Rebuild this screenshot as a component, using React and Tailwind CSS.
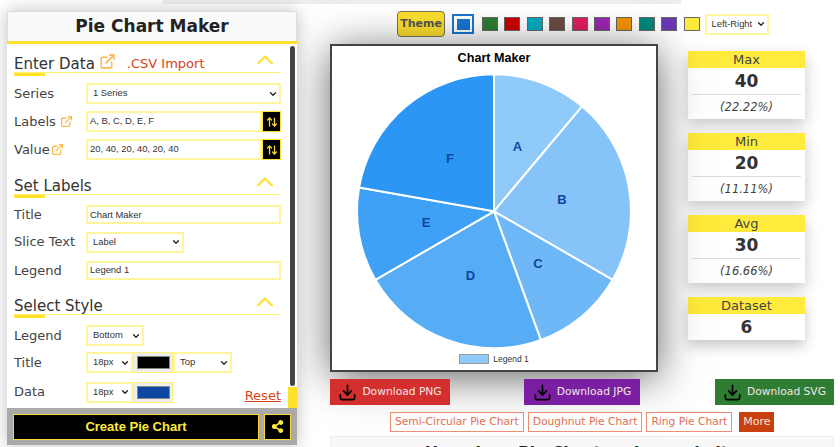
import React from "react";
import { ExternalLink, ChevronUp, ChevronDown, ArrowUpDown, Download } from "lucide-react";
import { FaShareAlt } from "react-icons/fa";

const slices = [
  { label: "A", from: 0, to: 40, color: "#90caf9", x: 517.5, y: 146 },
  { label: "B", from: 40, to: 120, color: "#85c3f8", x: 562, y: 199 },
  { label: "C", from: 120, to: 160, color: "#6fb8f7", x: 538, y: 263 },
  { label: "D", from: 160, to: 240, color: "#56adf6", x: 470.5, y: 275 },
  { label: "E", from: 240, to: 280, color: "#3fa1f5", x: 426, y: 222 },
  { label: "F", from: 280, to: 360, color: "#2b96f3", x: 450, y: 158 },
];

const swatches = ["#2e7d32", "#cc0000", "#00acc1", "#6d4c41", "#e01e63", "#9c27b0", "#f59300", "#00897b", "#673ab7", "#ffeb3b"];

const field = "h-[21px] border-2 border-[#fff59d] bg-white text-[9.4px] text-[#333] font-['Liberation_Sans',sans-serif] flex items-center";

const point = (deg, r) => {
  const a = ((deg - 90) * Math.PI) / 180;
  return [164 + r * Math.cos(a), 167.3 + r * Math.sin(a)];
};

const slicePath = (from, to) => {
  const [x1, y1] = point(from, 137);
  const [x2, y2] = point(to, 137);
  return `M164 167.3 L${x1} ${y1} A137 137 0 0 1 ${x2} ${y2} Z`;
};

const FakeSelect = ({ children, className }) => (
  <div className={`${field} justify-between pl-[5px] pr-[1px] ${className}`}>
    <span>{children}</span>
    <ChevronDown size={10} strokeWidth={3} className="text-[#222]" />
  </div>
);

const SectionHead = ({ title, children }) => (
  <div className="relative h-[29px] border-b border-[#fff176] flex items-end">
    <h2 className="text-[15px] leading-[16px] text-[#333]">{title}</h2>
    {children}
    <ChevronUp size={28} strokeWidth={2} className="absolute right-[2px] top-[2px] text-[#ffe135]" />
    <span className="absolute left-0 bottom-[-4px] w-[31px] h-[3px] bg-[#fee12b]" />
  </div>
);

const Row = ({ label, icon, children, className = "" }) => (
  <div className={`flex items-center ${className}`}>
    <div className="w-[72px] shrink-0 flex items-center text-[13px] text-[#444]">
      {label}
      {icon}
    </div>
    {children}
  </div>
);

const SwapButton = () => (
  <span className="w-[19px] h-[21px] bg-black border border-[#fee12b] flex items-center justify-center shrink-0">
    <ArrowUpDown size={12} strokeWidth={2.5} className="text-[#fdd835]" />
  </span>
);

const Stat = ({ title, value, pct }) => (
  <div className="w-[117px] bg-white shadow-[0_6px_14px_rgba(0,0,0,0.22)] text-center text-[#333]">
    <div className="h-[17px] bg-[#ffeb3b] text-[13px] leading-[18px] text-[#444]">{title}</div>
    <div className="text-[17px] font-bold leading-[26px]">{value}</div>
    {pct && (
      <div className="mx-[4px] border-t border-[#ddd] h-[25px] text-[11.5px] italic leading-[24px] text-[#444]">{pct}</div>
    )}
  </div>
);

const DownloadBtn = ({ label, color, width, className = "" }) => (
  <button className={`h-[26px] ${width} ${color} ${className} flex items-center justify-center gap-[5px] text-[10.7px] text-[#f3e5e5]`}>
    <Download size={19} strokeWidth={2.2} className="text-black" />
    {label}
  </button>
);

const RelatedLink = ({ children }) => (
  <a className="h-[20px] px-[4px] border border-[#e8906f] text-[#e07050] text-[10.7px] leading-[18px] whitespace-nowrap">{children}</a>
);

export default function App() {
  return (
    <div className="relative w-[840px] h-[447px] overflow-hidden bg-white font-['DejaVu_Sans',sans-serif]">
      <div className="absolute left-[162px] top-0 w-[519px] h-[4px] bg-[#eeeeee]" />

      <div className="flex items-start pl-[7px] pt-[11px]">
        {/* left panel */}
        <aside className="relative z-10 w-[290px] h-[434px] shrink-0 flex flex-col bg-white shadow-[0_0_16px_rgba(0,0,0,0.25)]">
          <div className="h-[30px] shrink-0 bg-[#fafafa] border border-b-0 border-[#d8dde2] text-center text-[17px] font-bold leading-[29px] text-[#222]">
            Pie Chart Maker
          </div>
          <div className="h-[3px] shrink-0 bg-[#fee12b]" />
          <div className="relative flex-1 min-h-0 pl-[7px] pr-[16px] overflow-hidden">
            <span className="absolute right-0 top-0 bottom-0 w-[9px] bg-[#fee12b]" />
            <span className="absolute right-0 top-0 h-[343px] w-[9px] bg-white" />
            <span className="absolute right-[2px] top-[2px] h-[340px] w-[5px] rounded-full bg-[#444]" />

            <SectionHead title="Enter Data">
              <ExternalLink size={17} strokeWidth={2.2} className="ml-[4px] mb-[2px] text-[#fdb94d]" />
              <span className="ml-[11px] text-[13px] leading-[16px] text-[#d84315]">.CSV Import</span>
            </SectionHead>
            <div className="mt-[10px] flex flex-col gap-[7px]">
              <Row label="Series">
                <FakeSelect className="flex-1">1 Series</FakeSelect>
              </Row>
              <Row label="Labels" icon={<ExternalLink size={13} strokeWidth={2.4} className="ml-[4px] text-[#fdb94d]" />}>
                <div className={`${field} flex-1 pl-[2px]`}>A, B, C, D, E, F</div>
                <SwapButton />
              </Row>
              <Row label="Value" icon={<ExternalLink size={13} strokeWidth={2.4} className="ml-[1px] text-[#fdb94d]" />}>
                <div className={`${field} flex-1 pl-[2px]`}>20, 40, 20, 40, 20, 40</div>
                <SwapButton />
              </Row>
            </div>

            <div className="mt-[6px]">
              <SectionHead title="Set Labels" />
            </div>
            <div className="mt-[10px] flex flex-col gap-[7px]">
              <Row label="Title">
                <div className={`${field} flex-1 !h-[19px] pl-[2px]`}>Chart Maker</div>
              </Row>
              <Row label="Slice Text">
                <FakeSelect className="w-[98px]">Label</FakeSelect>
              </Row>
              <Row label="Legend" className="mt-[1px]">
                <div className={`${field} flex-1 !h-[19px] pl-[2px]`}>Legend 1</div>
              </Row>
            </div>

            <div className="mt-[6px]">
              <SectionHead title="Select Style" />
            </div>
            <div className="mt-[10px] flex flex-col gap-[6px]">
              <Row label="Legend">
                <FakeSelect className="w-[58px]">Bottom</FakeSelect>
              </Row>
              <Row label="Title">
                <FakeSelect className="w-[47px]">18px</FakeSelect>
                <span className="w-[40px] h-[21px] bg-[#eeeeee] border border-[#fff176] flex items-center justify-center">
                  <span className="w-[33px] h-[13px] bg-black border border-[#888]" />
                </span>
                <FakeSelect className="w-[59px]">Top</FakeSelect>
              </Row>
              <Row label="Data" className="mt-[1px]">
                <FakeSelect className="w-[47px]">18px</FakeSelect>
                <span className="w-[40px] h-[21px] bg-[#eeeeee] border border-[#fff176] flex items-center justify-center">
                  <span className="w-[33px] h-[13px] bg-[#0d47a1] border border-[#888]" />
                </span>
                <a className="ml-auto mt-[8px] text-[13px] leading-[16px] text-[#d84315] underline">Reset</a>
              </Row>
            </div>
          </div>
          <div className="h-[37px] shrink-0 bg-[#aaaaaa] flex items-center gap-[5px] pl-[6px]">
            <button className="w-[246px] h-[26px] bg-black border border-[#fdd835] text-[#ffeb3b] text-[13px] font-bold font-['Liberation_Sans',sans-serif]">
              Create Pie Chart
            </button>
            <button className="w-[27px] h-[26px] bg-black border border-[#fdd835] flex items-center justify-center">
              <FaShareAlt size={13} className="text-[#ffeb3b]" />
            </button>
          </div>
        </aside>

        {/* chart area */}
        <main className="ml-[33px] w-[504px] shrink-0 flex flex-col">
          <div className="flex items-center h-[26px] pl-[67px]">
            <button className="w-[48px] h-[26px] rounded-[4px] bg-[#fde02f] border border-[#77715a] text-[11px] font-bold text-[#555]">
              Theme
            </button>
            <span className="ml-[7px] w-[22px] h-[20px] border-2 border-[#1976d2] flex items-center justify-center">
              <span className="w-[13px] h-[11px] bg-[#1976d2]" />
            </span>
            <div className="ml-[8px] flex gap-[6.4px]">
              {swatches.map((c) => (
                <span key={c} className="w-[16px] h-[14px] border border-[#666]" style={{ backgroundColor: c }} />
              ))}
            </div>
            <FakeSelect className="ml-[5px] w-[64px]">Left-Right</FakeSelect>
          </div>

          <div className="mt-[7px] flex items-start">
            <div className="relative w-[328px] h-[328px] shrink-0 bg-white border-2 border-[#444] shadow-[0_6px_40px_rgba(0,0,0,0.6)] font-['Liberation_Sans',sans-serif]">
              <div className="text-center text-[12.6px] font-bold leading-[16px] pt-[4px] text-black">Chart Maker</div>
              <svg className="absolute left-[-2px] top-[-2px]" width="328" height="328" viewBox="0 0 328 328">
                {slices.map((s) => (
                  <path key={s.label} d={slicePath(s.from, s.to)} fill={s.color} stroke="#ffffff" strokeWidth="2" />
                ))}
                {slices.map((s) => (
                  <text key={s.label} x={s.x - 330} y={s.y - 44 + 4.5} textAnchor="middle" fontSize="13" fontWeight="bold" fill="#0d47a1">
                    {s.label}
                  </text>
                ))}
              </svg>
              <div className="absolute left-0 right-0 bottom-[5px] flex justify-center items-center gap-[4px] text-[8.5px] leading-[12px] text-[#333]">
                <span className="w-[30px] h-[10px] bg-[#90caf9] border border-[#999]" />
                Legend 1
              </div>
            </div>

            <div className="ml-[30px] mt-[7px] flex flex-col gap-[14px]">
              <Stat title="Max" value="40" pct="(22.22%)" />
              <Stat title="Min" value="20" pct="(11.11%)" />
              <Stat title="Avg" value="30" pct="(16.66%)" />
              <Stat title="Dataset" value="6" />
            </div>
          </div>

          <div className="relative mt-[7px] flex">
            <DownloadBtn label="Download PNG" color="bg-[#d32f2f]" width="w-[120px]" />
            <DownloadBtn label="Download JPG" color="bg-[#7b1fa2]" width="w-[116px]" className="ml-[74px]" />
            <DownloadBtn label="Download SVG" color="bg-[#2e7d32]" width="w-[119px]" className="ml-auto" />
          </div>

          <div className="relative mt-[7px] flex items-center pl-[60px] gap-[4px]">
            <RelatedLink>Semi-Circular Pie Chart</RelatedLink>
            <RelatedLink>Doughnut Pie Chart</RelatedLink>
            <RelatedLink>Ring Pie Chart</RelatedLink>
            <a className="ml-[3px] h-[20px] w-[35px] text-center bg-[#c8400e] text-[#f5e6dc] text-[11px] leading-[20px]">More</a>
          </div>

          <div className="relative mt-[4px] h-[40px] bg-[#f8f8f8] border border-[#eeeeee] text-center text-[16px] font-bold leading-[32px] text-[#222] whitespace-nowrap">
            How does Pie Chart maker website
          </div>
        </main>
      </div>
    </div>
  );
}
